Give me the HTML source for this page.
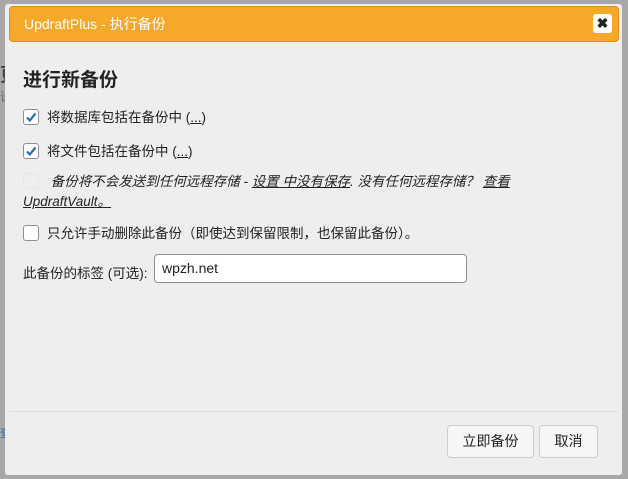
<!DOCTYPE html>
<html><head><meta charset="utf-8"><style>
body{margin:0;width:628px;height:479px;background:#a8a8a8;position:relative;overflow:hidden;font-family:"Liberation Sans","Noto Sans CJK SC",sans-serif;font-size:13.5px;color:#222}
.dlg{position:absolute;left:5px;top:4px;width:617px;height:471px;background:#eeeeee;border-radius:3px}
.tb{position:absolute;left:4px;top:2px;width:610px;height:36px;background:#f6a828;border:1px solid #e78f08;box-sizing:border-box;border-radius:4px;color:#fff;font-size:14px;line-height:34px;padding-left:14px}
.x{position:absolute;right:6px;top:7px;width:19px;height:19px;background:#fff;border-radius:3px;color:#222;font-size:14px;font-weight:bold;line-height:19px;text-align:center}
h2{position:absolute;left:18px;top:61px;margin:0;font-size:19px;font-weight:bold;color:#222}
.row{position:absolute;left:18px;}
.cb{display:inline-block;width:14px;height:14px;border:1px solid #8c8f94;border-radius:3px;background:#fff;vertical-align:-3px;margin-right:8px;position:relative}
.cb svg{position:absolute;left:0;top:0}
u{text-decoration:underline}
.inp{position:absolute;left:149px;top:250px;width:313px;height:29px;border:1px solid #8c8f94;border-radius:4px;background:#fff;box-sizing:border-box;padding-left:7px;line-height:27px;font-size:14px}
.line{position:absolute;left:4px;right:4px;top:407px;border-top:1px solid #ddd}
.btn{position:absolute;top:421px;height:33px;border:1px solid #ccc;border-radius:4px;background:#f6f6f6;box-sizing:border-box;text-align:center;line-height:31px;font-size:14px}
</style></head><body>
<div style="position:absolute;left:0;top:60px;font-size:19px;color:#444;font-weight:bold">更</div>
<div style="position:absolute;left:0;top:88px;font-size:12px;color:#666">设</div>
<div style="position:absolute;left:0;top:424px;font-size:12px;color:#2271b1">查</div>
<div class="dlg">
<div class="tb">UpdraftPlus - 执行备份<div class="x">✖</div></div>
<h2>进行新备份</h2>
<div class="row" style="top:102px"><span class="cb"><svg width="14" height="14" viewBox="0 0 14 14"><path d="M3 7.5l2.8 3L11.5 3.5" stroke="#2271b1" stroke-width="2.2" fill="none"/></svg></span>将数据库包括在备份中 (<u>...</u>)</div>
<div class="row" style="top:136px"><span class="cb"><svg width="14" height="14" viewBox="0 0 14 14"><path d="M3 7.5l2.8 3L11.5 3.5" stroke="#2271b1" stroke-width="2.2" fill="none"/></svg></span>将文件包括在备份中 (<u>...</u>)</div>
<div class="row" style="top:168px;width:525px;line-height:20px;font-style:italic"><span class="cb" style="border-color:#e6e6e6;background:#eee"></span> 备份将不会发送到任何远程存储 - <u>设置 中没有保存</u>. 没有任何远程存储？ <u>查看 UpdraftVault。</u></div>
<div class="row" style="top:218px"><span class="cb" style="width:14px;height:14px"></span>只允许手动删除此备份（即使达到保留限制，也保留此备份）。</div>
<div class="row" style="top:258px">此备份的标签 (可选):</div>
<div class="inp">wpzh.net</div>
<div class="line"></div>
<div class="btn" style="left:442px;width:87px">立即备份</div>
<div class="btn" style="left:534px;width:59px">取消</div>
</div>
</body></html>
